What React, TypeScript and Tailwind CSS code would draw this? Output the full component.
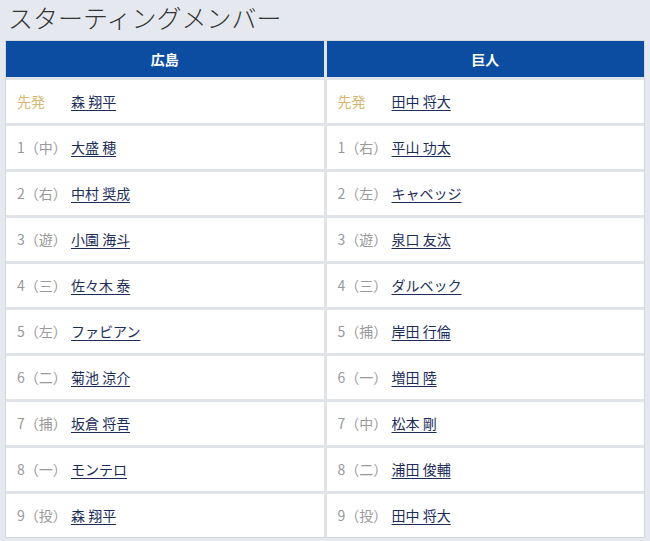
const home = [
  { order: "先発", name: "森 翔平" },
  { order: "1（中）", name: "大盛 穂" },
  { order: "2（右）", name: "中村 奨成" },
  { order: "3（遊）", name: "小園 海斗" },
  { order: "4（三）", name: "佐々木 泰" },
  { order: "5（左）", name: "ファビアン" },
  { order: "6（二）", name: "菊池 涼介" },
  { order: "7（捕）", name: "坂倉 将吾" },
  { order: "8（一）", name: "モンテロ" },
  { order: "9（投）", name: "森 翔平" },
];

const away = [
  { order: "先発", name: "田中 将大" },
  { order: "1（右）", name: "平山 功太" },
  { order: "2（左）", name: "キャベッジ" },
  { order: "3（遊）", name: "泉口 友汰" },
  { order: "4（三）", name: "ダルベック" },
  { order: "5（捕）", name: "岸田 行倫" },
  { order: "6（一）", name: "増田 陸" },
  { order: "7（中）", name: "松本 剛" },
  { order: "8（二）", name: "浦田 俊輔" },
  { order: "9（投）", name: "田中 将大" },
];

function Team({ title, players }: { title: string; players: { order: string; name: string }[] }) {
  return (
    <div className="flex flex-col gap-[3px]">
      <div className="h-[36px] bg-[#0c4da2] flex items-center justify-center text-white text-[14px] font-bold">
        {title}
      </div>
      {players.map((p, i) => (
        <div key={i} className="h-[43px] bg-white flex items-center pl-[11px] text-[14px]">
          <span className={`w-[54px] ${i === 0 ? "text-[#d6b56e]" : "text-[#9a9a9a]"}`}>{p.order}</span>
          <a href="#" className="text-[#1c2d5a] underline underline-offset-[3px] decoration-[#1c2d5a]">
            {p.name}
          </a>
        </div>
      ))}
    </div>
  );
}

export default function App() {
  return (
    <div
      className="w-[650px] h-[541px] bg-[#e5e9ef] overflow-hidden"
      style={{ fontFamily: '"Noto Sans CJK JP", "Noto Sans", sans-serif' }}
    >
      <h1 className="h-[34px] pl-[8px] pt-[1px] text-[25px] leading-[32px] font-light text-[#333]">
        スターティングメンバー
      </h1>
      <div className="ml-[5px] mt-[6px] w-[640px] border border-[#d3d8e0] bg-[#e0e4ea] grid grid-cols-2 gap-x-[3px]">
        <Team title="広島" players={home} />
        <Team title="巨人" players={away} />
      </div>
    </div>
  );
}
